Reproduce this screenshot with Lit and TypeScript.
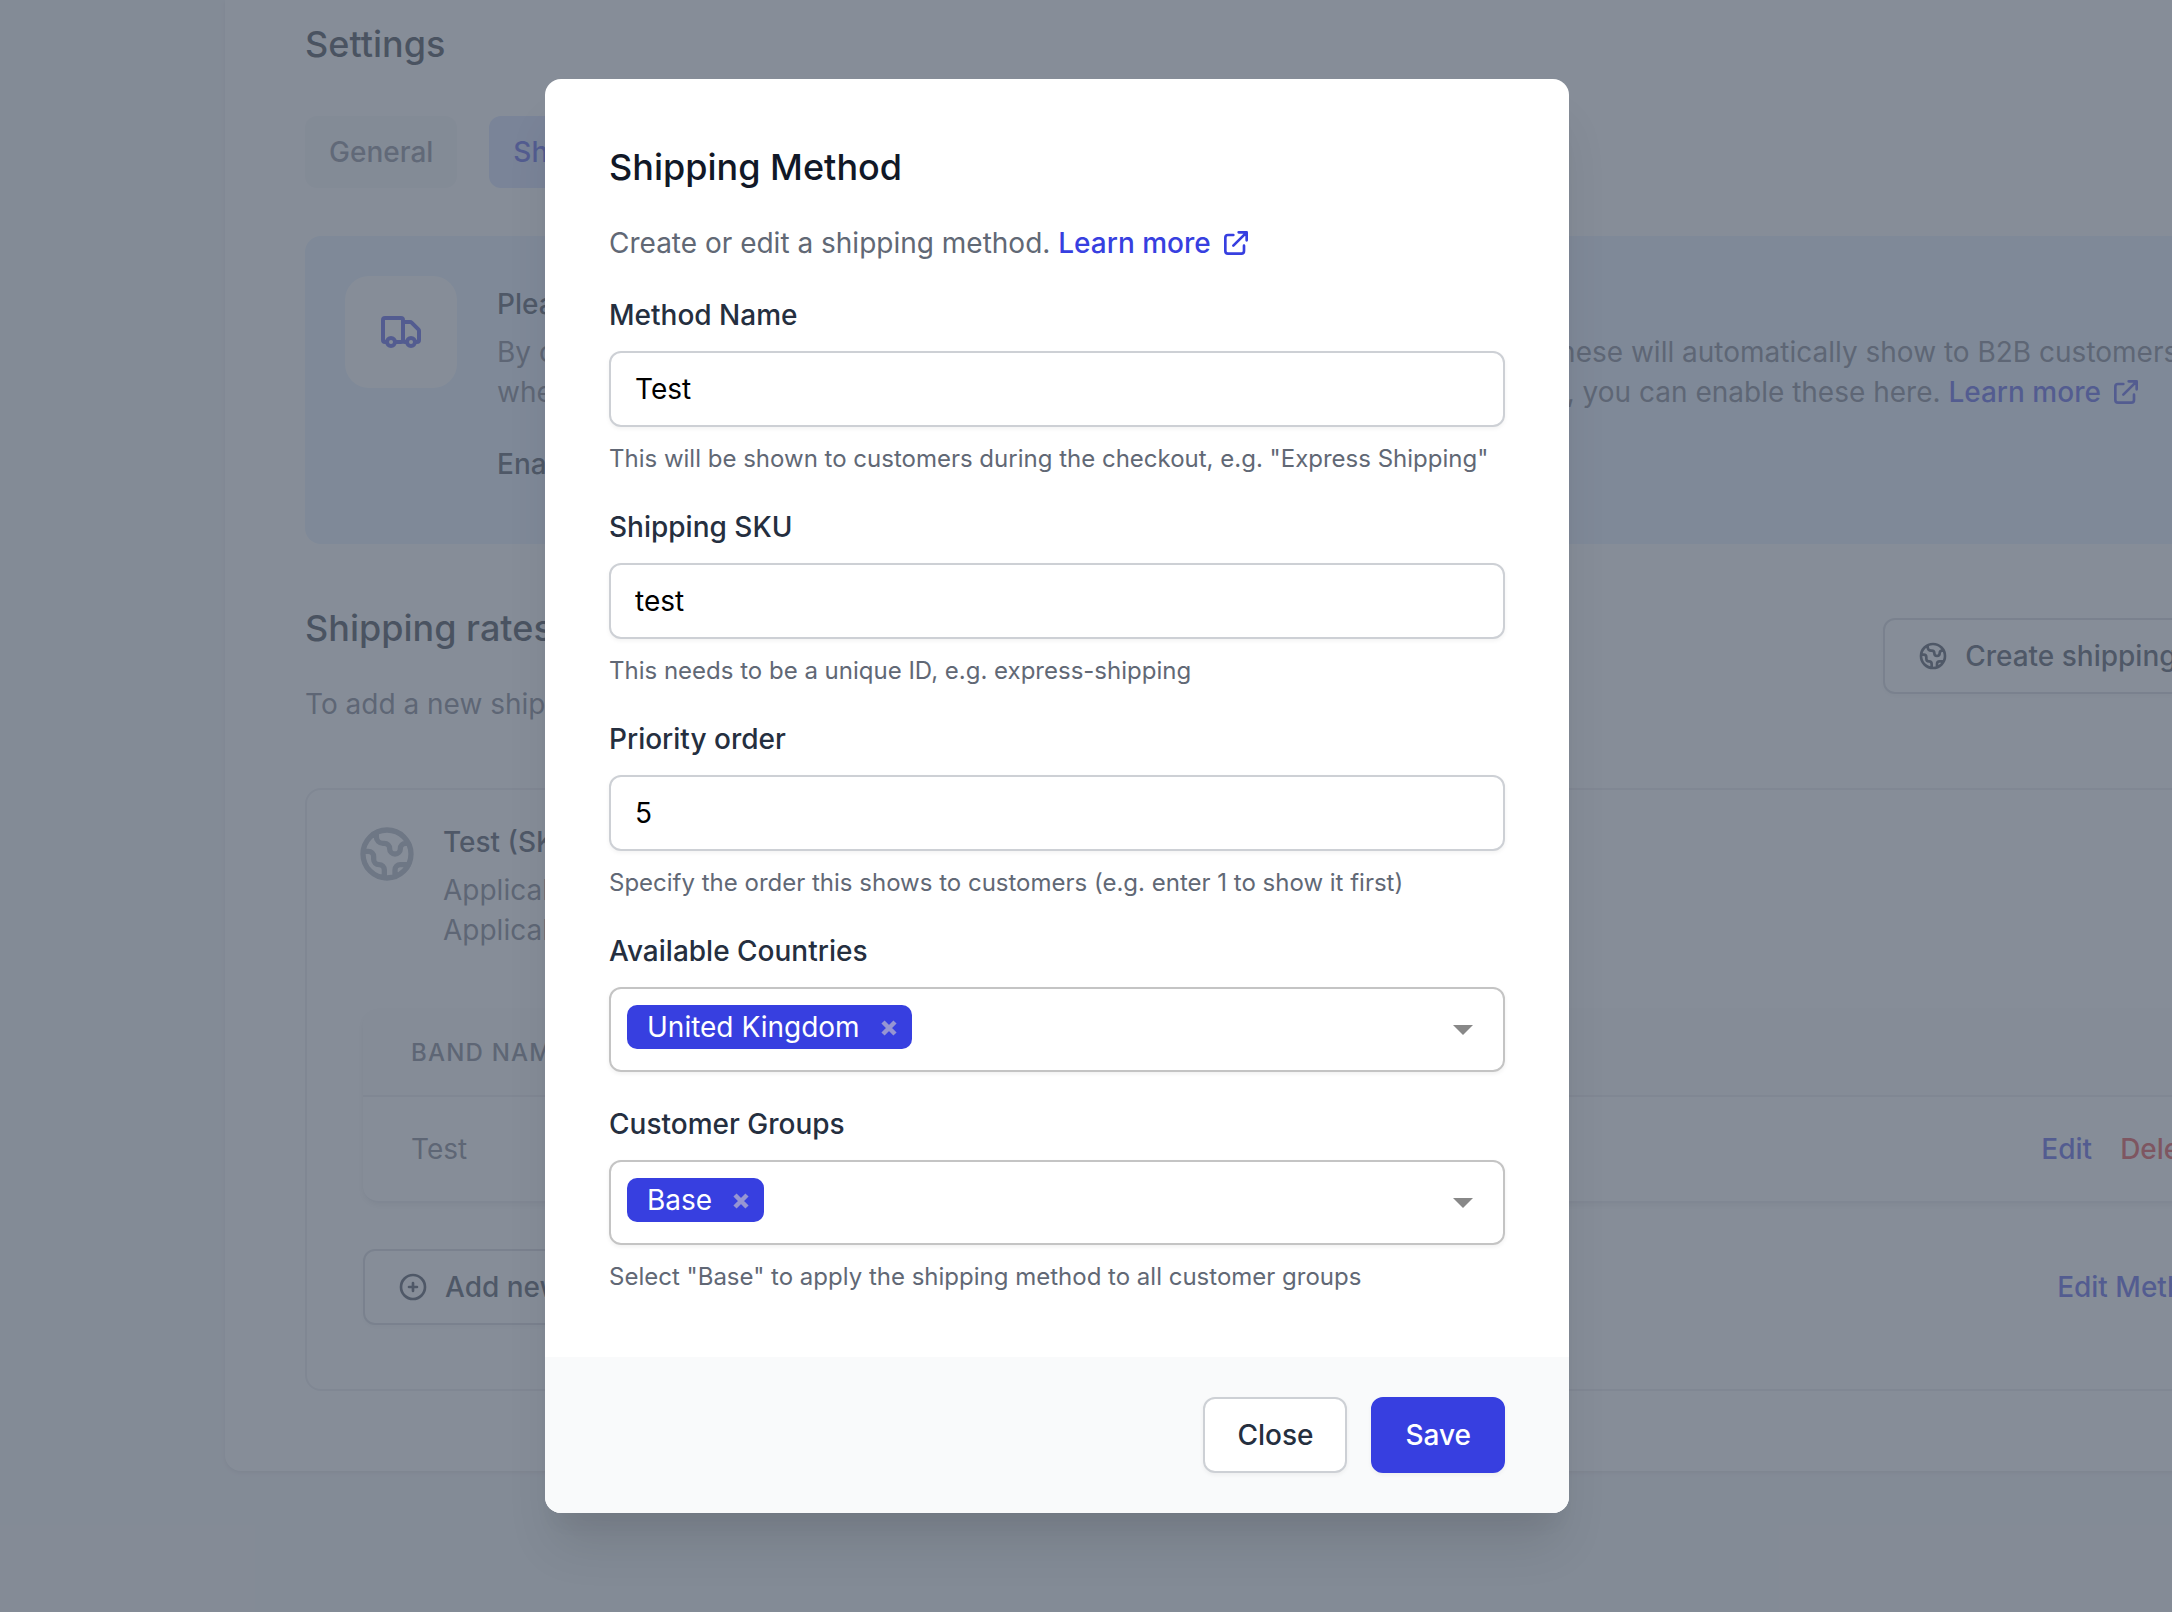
import { LitElement, html, css, svg } from "lit";
import { customElement, property } from "lit/decorators.js";

const icons = {
  truck: svg`<path d="M13 16V6a1 1 0 00-1-1H4a1 1 0 00-1 1v10a1 1 0 001 1h1m8-1a1 1 0 01-1 1H9m4-1V8a1 1 0 011-1h2.586a1 1 0 01.707.293l3.414 3.414a1 1 0 01.293.707V16a1 1 0 01-1 1h-1m-6-1a1 1 0 001 1h1M5 17a2 2 0 104 0m-4 0a2 2 0 114 0m6 0a2 2 0 104 0m-4 0a2 2 0 114 0"/>`,
  globe: svg`<path d="M3.055 11H5a2 2 0 012 2v1a2 2 0 002 2 2 2 0 012 2v2.945M8 3.935V5.5A2.5 2.5 0 0010.5 8h.5a2 2 0 012 2 2 2 0 104 0 2 2 0 012-2h1.064M15 20.488V18a2 2 0 012-2h3.064M21 12a9 9 0 11-18 0 9 9 0 0118 0z"/>`,
  plus: svg`<path d="M12 9v3m0 0v3m0-3h3m-3 0H9m12 0a9 9 0 11-18 0 9 9 0 0118 0z"/>`,
  external: svg`<path d="M10 6H6a2 2 0 00-2 2v10a2 2 0 002 2h10a2 2 0 002-2v-4M14 4h6m0 0v6m0-6L10 14"/>`,
  cross: svg`<path d="M4 4l16 16M20 4L4 20" stroke-width="6" stroke-linecap="butt"/>`,
};

@customElement("line-icon")
class LineIcon extends LitElement {
  @property() name: keyof typeof icons = "globe";

  static styles = css`
    :host {
      display: inline-block;
      flex: none;
      width: 32px;
      height: 32px;
    }
    .glyph {
      display: block;
      width: 100%;
      height: 100%;
      fill: none;
      stroke: currentColor;
      stroke-width: 2;
      stroke-linecap: round;
      stroke-linejoin: round;
    }
  `;

  render() {
    return html`<svg class="glyph" viewBox="0 0 24 24" aria-hidden="true">${icons[this.name]}</svg>`;
  }
}

const shared = css`
  * {
    box-sizing: border-box;
  }
  h1,
  h2,
  h3,
  p {
    margin: 0;
  }
  .title {
    font-size: 36px;
    line-height: 48px;
    font-weight: 500;
    color: #111827;
  }
  .link {
    color: #373fe0;
    font-weight: 500;
    text-decoration: none;
  }
  .link line-icon {
    vertical-align: -6px;
    margin-left: 2px;
  }
  .button {
    display: inline-flex;
    align-items: center;
    gap: 16px;
    height: 76px;
    padding: 0 32px;
    border: 2px solid #cdd0d5;
    border-radius: 12px;
    background: #fff;
    color: #252f3f;
    font: 500 28px/40px Inter, sans-serif;
    white-space: nowrap;
    box-shadow: 0 2px 4px rgba(0, 0, 0, 0.05);
  }
`;

@customElement("settings-page")
class SettingsPage extends LitElement {
  static styles = [
    shared,
    css`
      :host {
        display: block;
        padding-left: 225px;
        color: #5f6673;
      }
      .sheet {
        margin-right: -228px;
        padding: 20px 80px 80px;
        background: #fff;
        border-radius: 0 0 16px 16px;
        box-shadow: 0 2px 4px rgba(0, 0, 0, 0.1);
        white-space: nowrap;
      }
      .tabs {
        display: flex;
        gap: 32px;
        margin: 48px 0;
      }
      .tab {
        padding: 16px 24px;
        border-radius: 12px;
        background: #f4f5f7;
        color: #6b7280;
        font-weight: 500;
        text-decoration: none;
      }
      .tab.current {
        background: #cddbfe;
        color: #373fe0;
      }
      .notice {
        display: flex;
        gap: 40px;
        padding: 40px 40px 60px;
        border-radius: 16px;
        background: #e1effe;
      }
      .badge {
        display: grid;
        place-items: center;
        flex: none;
        width: 112px;
        height: 112px;
        border-radius: 24px;
        background: #fff;
        color: #373fe0;
      }
      .badge line-icon {
        width: 48px;
        height: 48px;
      }
      .copy {
        flex: 1;
        padding-top: 8px;
      }
      .strong {
        color: #252f3f;
        font-size: 28px;
        font-weight: 500;
      }
      .columns {
        display: grid;
        grid-template-columns: 1044px 1fr;
        margin: 8px 0 32px;
      }
      .heading {
        display: flex;
        justify-content: space-between;
        margin: 60px 0 64px;
      }
      .heading .title {
        margin-bottom: 32px;
      }
      .heading .button {
        margin-top: 14px;
      }
      .method {
        padding: 32px 48px 64px;
        border: 2px solid #e5e7eb;
        border-radius: 16px;
      }
      .summary {
        display: flex;
        gap: 24px;
      }
      .summary line-icon {
        width: 64px;
        height: 64px;
        color: #9fa6b2;
      }
      .summary .strong {
        margin-bottom: 8px;
      }
      .rates {
        margin: 60px 8px 0;
      }
      .frame {
        overflow: hidden;
        border-bottom: 2px solid #e5e7eb;
        border-radius: 16px;
        box-shadow: 0 2px 6px rgba(0, 0, 0, 0.1);
      }
      .table {
        width: 100%;
        border-collapse: collapse;
      }
      .table th {
        height: 86px;
        padding: 0 48px;
        border-bottom: 2px solid #e5e7eb;
        background: #f9fafb;
        text-align: left;
        font-size: 24px;
        line-height: 32px;
        font-weight: 500;
        letter-spacing: 0.05em;
        text-transform: uppercase;
      }
      .table td {
        padding: 32px 56px 32px 48px;
      }
      .actions {
        display: flex;
        justify-content: flex-end;
        gap: 28px;
      }
      .danger {
        color: #e02424;
      }
      .footer {
        display: flex;
        align-items: center;
        justify-content: space-between;
        margin-top: 46px;
        padding-right: 44px;
      }
    `,
  ];

  render() {
    return html`
      <main class="sheet">
        <h1 class="title">Settings</h1>
        <nav class="tabs">
          <a class="tab" href="#general">General</a>
          <a class="tab current" href="#shipping">Shipping</a>
        </nav>
        <section class="notice">
          <span class="badge"><line-icon name="truck"></line-icon></span>
          <div class="copy">
            <p class="strong">Please</p>
            <div class="columns">
              <p>By creating<br />when</p>
              <p>
                These will automatically show to B2B customers<br />to, you can enable these here.
                <a class="link" href="#learn">Learn more <line-icon name="external"></line-icon></a>
              </p>
            </div>
            <p class="strong">Enable</p>
          </div>
        </section>
        <header class="heading">
          <div>
            <h2 class="title">Shipping rates</h2>
            <p>To add a new shipping</p>
          </div>
          <button class="button" type="button">
            <line-icon name="globe"></line-icon>Create shipping method
          </button>
        </header>
        <section class="method">
          <div class="summary">
            <line-icon name="globe"></line-icon>
            <div>
              <h3 class="strong">Test (SKU)</h3>
              <p>Applicable<br />Applicable</p>
            </div>
          </div>
          <div class="rates">
            <div class="frame">
              <table class="table">
                <thead>
                  <tr>
                    <th scope="col" colspan="2">Band name</th>
                  </tr>
                </thead>
                <tbody>
                  <tr>
                    <td>Test</td>
                    <td>
                      <div class="actions">
                        <a class="link" href="#edit">Edit</a>
                        <a class="link danger" href="#delete">Delete</a>
                      </div>
                    </td>
                  </tr>
                </tbody>
              </table>
            </div>
            <div class="footer">
              <button class="button" type="button">
                <line-icon name="plus"></line-icon>Add new
              </button>
              <a class="link" href="#method">Edit Method</a>
            </div>
          </div>
        </section>
      </main>
    `;
  }
}

interface TextField {
  id: string;
  label: string;
  value: string;
  hint: string;
}

interface TagField {
  id: string;
  label: string;
  tag: string;
  hint?: string;
}

@customElement("shipping-dialog")
class ShippingDialog extends LitElement {
  private textFields: TextField[] = [
    { id: "name", label: "Method Name", value: "Test", hint: 'This will be shown to customers during the checkout, e.g. "Express Shipping"' },
    { id: "sku", label: "Shipping SKU", value: "test", hint: "This needs to be a unique ID, e.g. express-shipping" },
    { id: "order", label: "Priority order", value: "5", hint: "Specify the order this shows to customers (e.g. enter 1 to show it first)" },
  ];

  private tagFields: TagField[] = [
    { id: "countries", label: "Available Countries", tag: "United Kingdom" },
    { id: "groups", label: "Customer Groups", tag: "Base", hint: 'Select "Base" to apply the shipping method to all customer groups' },
  ];

  static styles = [
    shared,
    css`
      :host {
        display: block;
        width: 100%;
        max-width: 1024px;
      }
      .dialog {
        overflow: hidden;
        border-radius: 16px;
        background: #fff;
        color: #616875;
        box-shadow: 0 40px 50px -10px rgba(0, 0, 0, 0.1), 0 20px 20px -10px rgba(0, 0, 0, 0.04);
      }
      .body {
        display: flex;
        flex-direction: column;
        gap: 32px;
        padding: 64px;
      }
      .field {
        display: flex;
        flex-direction: column;
        gap: 16px;
      }
      .label {
        color: #252f3f;
        font-weight: 500;
      }
      .input {
        width: 100%;
        height: 76px;
        padding: 0 24px;
        border: 2px solid #cdd0d5;
        border-radius: 12px;
        background: #fff;
        color: #000;
        font: 400 28px/40px Inter, sans-serif;
        box-shadow: 0 2px 4px rgba(0, 0, 0, 0.05);
      }
      .hint {
        font-size: 24px;
        line-height: 32px;
      }
      .picker {
        display: flex;
        align-items: flex-start;
        height: 85px;
        padding: 16px 20px 16px 16px;
        border: 2px solid #c4c4c4;
        border-radius: 12px;
        box-shadow: 0 2px 4px rgba(0, 0, 0, 0.06);
      }
      .tag {
        display: flex;
        align-items: center;
        gap: 20px;
        height: 44px;
        padding: 0 14px 0 20px;
        border-radius: 10px;
        background: #373fe0;
        color: #fff;
      }
      .remove {
        display: flex;
        padding: 2px 0 0;
        border: 0;
        background: none;
        color: #9695d2;
      }
      .remove line-icon {
        width: 18px;
        height: 18px;
      }
      .search {
        flex: 1;
        min-width: 0;
        height: 44px;
        border: 0;
        outline: 0;
        background: none;
        font: 400 28px/40px Inter, sans-serif;
      }
      .toggle {
        display: grid;
        place-items: center;
        width: 40px;
        height: 50px;
        padding: 0;
        border: 0;
        background: none;
      }
      .caret {
        border: 10px solid transparent;
        border-top-color: #888;
        border-bottom: 0;
      }
      .bar {
        display: flex;
        justify-content: flex-end;
        gap: 24px;
        padding: 40px 64px;
        background: #f9fafb;
      }
      .primary {
        border-color: #373fe0;
        background: #373fe0;
        color: #fff;
      }
    `,
  ];

  render() {
    return html`
      <form class="dialog" role="dialog" aria-labelledby="heading">
        <div class="body">
          <h2 class="title" id="heading">Shipping Method</h2>
          <p>
            Create or edit a shipping method.
            <a class="link" href="#learn">Learn more <line-icon name="external"></line-icon></a>
          </p>
          ${this.textFields.map(
            (f) => html`<div class="field">
              <label class="label" for=${f.id}>${f.label}</label>
              <input class="input" id=${f.id} .value=${f.value} />
              <p class="hint">${f.hint}</p>
            </div>`
          )}
          ${this.tagFields.map(
            (f) => html`<div class="field">
              <label class="label" for=${f.id}>${f.label}</label>
              <div class="picker">
                <span class="tag">
                  ${f.tag}
                  <button class="remove" type="button"><line-icon name="cross"></line-icon></button>
                </span>
                <input class="search" id=${f.id} role="combobox" aria-expanded="false" />
                <button class="toggle" type="button"><span class="caret"></span></button>
              </div>
              ${f.hint ? html`<p class="hint">${f.hint}</p>` : ""}
            </div>`
          )}
        </div>
        <footer class="bar">
          <button class="button" type="button">Close</button>
          <button class="button primary" type="button">Save</button>
        </footer>
      </form>
    `;
  }
}

@customElement("app-root")
class AppRoot extends LitElement {
  static styles = css`
    :host {
      display: block;
      position: relative;
      min-height: 100vh;
      overflow: hidden;
      background: #f4f5f7;
      font: 400 28px/40px Inter, sans-serif;
    }
    .overlay {
      position: absolute;
      inset: 0;
      display: flex;
      justify-content: center;
      align-items: flex-start;
      padding: 79px 58px 0 0;
      background: rgba(94, 103, 118, 0.75);
    }
  `;

  render() {
    return html`
      <settings-page></settings-page>
      <div class="overlay"><shipping-dialog></shipping-dialog></div>
    `;
  }
}
